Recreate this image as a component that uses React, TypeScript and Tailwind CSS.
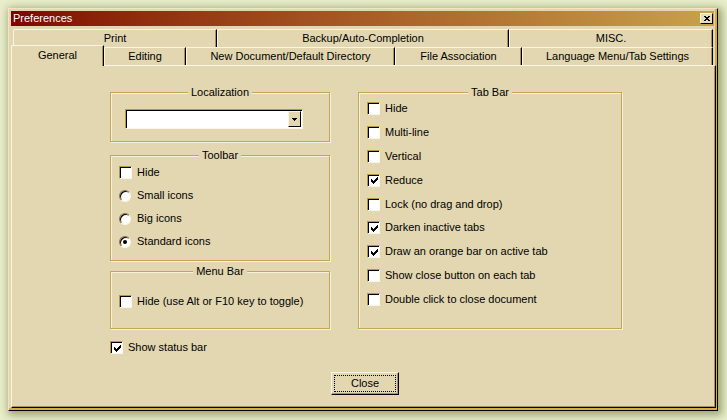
import type { ReactNode } from "react";

// classic 7x7 check glyph
const CHECK =
  "M6 0h1v1h-1z M5 1h2v1h-2z M0 2h1v1h-1z M4 2h3v1h-3z M0 3h2v1h-2z M3 3h3v1h-3z M0 4h5v1h-5z M1 5h3v1h-3z M2 6h1v1h-1z";

function CheckBox({ on }: { on?: boolean }) {
  return (
    <span className="flex h-[13px] w-[13px] shrink-0 items-center justify-center border border-t-[#b8963e] border-l-[#b8963e] border-r-[#fbf6e6] border-b-[#fbf6e6] bg-white shadow-[inset_1px_1px_0_#000]">
      {on && (
        <svg width="7" height="7" viewBox="0 0 7 7" shapeRendering="crispEdges" className="ml-[1px] mt-[1px]">
          <path d={CHECK} fill="#000" />
        </svg>
      )}
    </span>
  );
}

function Radio({ on }: { on?: boolean }) {
  return (
    <span className="flex h-[12px] w-[12px] shrink-0 items-center justify-center rounded-full border border-t-[#8a7040] border-l-[#8a7040] border-r-[#fbf6e6] border-b-[#fbf6e6] bg-white shadow-[inset_1px_1px_0_#000]">
      {on && <span className="h-[4px] w-[4px] rounded-full bg-black" />}
    </span>
  );
}

function Option({ label, on, radio }: { label: string; on?: boolean; radio?: boolean }) {
  return (
    <div className="flex h-[13px] items-center gap-[5px] whitespace-nowrap">
      {radio ? <Radio on={on} /> : <CheckBox on={on} />}
      <span className={radio ? "ml-[1px]" : ""}>{label}</span>
    </div>
  );
}

function Group({ title, className, children }: { title: string; className: string; children?: ReactNode }) {
  return (
    <div className={`relative border border-[#c4a456] shadow-[inset_1px_1px_0_#f7f0da,1px_1px_0_#f7f0da] ${className}`}>
      <span className="absolute left-1/2 top-[-7px] -translate-x-1/2 bg-[#e3d7b1] px-[3px] leading-[13px] whitespace-nowrap">
        {title}
      </span>
      {children}
    </div>
  );
}

function Tab({ label, className }: { label: string; className: string }) {
  return (
    <div
      className={`flex items-center justify-center whitespace-nowrap rounded-tl-[2px] border-t border-l border-r border-t-[#fbf5e2] border-l-[#fbf5e2] border-r-black shadow-[inset_-1px_0_0_#a89060] ${className}`}
    >
      {label}
    </div>
  );
}

export default function App() {
  return (
    <div className="h-[420px] w-[727px] overflow-hidden bg-[#e9eecb] pl-[8px] pt-[8px] font-['Liberation_Sans',Arial,sans-serif] text-[11px] leading-[13px] text-black">
      {/* window */}
      <div className="flex h-[403px] w-[710px] flex-col border border-t-[#efe6c6] border-l-[#efe6c6] border-r-black border-b-black bg-[#e3d7b1] pb-[2px] pl-[2px] pr-[1px] pt-[2px] shadow-[inset_-2px_-2px_0_#d6ab46,2px_2px_8px_2px_rgba(90,100,40,0.55)]">
        {/* title bar */}
        <div className="flex h-[15px] w-[703px] items-start justify-between bg-linear-to-r from-[#800000] to-[#c8a24a]">
          <span className="ml-[2px] mt-[1px] text-white">Preferences</span>
          <span className="mr-[1px] mt-[2px] flex h-[11px] w-[13px] items-center justify-center border border-t-[#fbf5e2] border-l-[#fbf5e2] border-r-black border-b-black bg-[#e6dcb8]">
            <svg width="6" height="5" viewBox="0 0 6 5" shapeRendering="crispEdges">
              <path d="M0 0h2v1h-2z M4 0h2v1h-2z M1 1h4v1h-4z M2 2h2v1h-2z M1 3h4v1h-4z M0 4h2v1h-2z M4 4h2v1h-2z" fill="#000" />
            </svg>
          </span>
        </div>

        {/* tab rows */}
        <div className="ml-[2px] mt-[3px] flex h-[18px]">
          <Tab label="Print" className="w-[204px]" />
          <Tab label="Backup/Auto-Completion" className="w-[292px]" />
          <Tab label="MISC." className="w-[204px]" />
        </div>
        <div className="-mt-[2px] flex h-[20px] items-end">
          <Tab label="General" className="relative z-10 -mb-[1px] h-[21px] w-[93px] bg-[#e3d7b1] pb-[2px]" />
          <Tab label="Editing" className="h-[18px] w-[82px]" />
          <Tab label="New Document/Default Directory" className="h-[18px] w-[209px]" />
          <Tab label="File Association" className="h-[18px] w-[127px]" />
          <Tab label="Language Menu/Tab Settings" className="h-[18px] w-[191px]" />
        </div>

        {/* tab panel */}
        <div className="flex flex-1 flex-col border border-t-[#fbf5e2] border-l-[#fbf5e2] border-r-black border-b-black shadow-[inset_-1px_-1px_0_#a89060]">
          <div className="ml-[98px] mt-[26px] flex items-start gap-[28px]">
            {/* left column */}
            <div className="flex w-[220px] flex-col">
              <Group title="Localization" className="h-[50px]">
                <div className="ml-[14px] mt-[16px] flex h-[20px] w-[178px] items-center justify-end border border-t-[#b8963e] border-l-[#b8963e] border-r-[#fbf6e6] border-b-[#fbf6e6] bg-white shadow-[inset_1px_1px_0_#000]">
                  <span className="mr-[1px] flex h-[16px] w-[13px] items-center justify-center border border-t-[#fbf5e2] border-l-[#fbf5e2] border-r-black border-b-black bg-[#e3d7b1]">
                    <svg width="5" height="3" viewBox="0 0 5 3" shapeRendering="crispEdges">
                      <path d="M0 0h5v1h-5z M1 1h3v1h-3z M2 2h1v1h-1z" fill="#000" />
                    </svg>
                  </span>
                </div>
              </Group>

              <Group title="Toolbar" className="mt-[13px] h-[106px]">
                <div className="ml-[8px] mt-[10px] flex flex-col gap-[10px]">
                  <Option label="Hide" />
                  <Option label="Small icons" radio />
                  <Option label="Big icons" radio />
                  <Option label="Standard icons" radio on />
                </div>
              </Group>

              <Group title="Menu Bar" className="mt-[10px] h-[58px]">
                <div className="ml-[8px] mt-[23px]">
                  <Option label="Hide (use Alt or F10 key to toggle)" />
                </div>
              </Group>
            </div>

            {/* right column */}
            <Group title="Tab Bar" className="h-[237px] w-[264px]">
              <div className="ml-[8px] mt-[9px] flex h-[204px] flex-col justify-between">
                <Option label="Hide" />
                <Option label="Multi-line" />
                <Option label="Vertical" />
                <Option label="Reduce" on />
                <Option label="Lock (no drag and drop)" />
                <Option label="Darken inactive tabs" on />
                <Option label="Draw an orange bar on active tab" on />
                <Option label="Show close button on each tab" />
                <Option label="Double click to close document" />
              </div>
            </Group>
          </div>

          <div className="ml-[98px] mt-[12px]">
            <Option label="Show status bar" on />
          </div>

          <div className="ml-[319px] mt-[18px] flex">
            <button className="flex h-[23px] w-[68px] border border-t-[#fbf5e2] border-l-[#fbf5e2] border-r-black border-b-black p-[2px] shadow-[inset_-1px_-1px_0_#a89060]">
              <span className="flex flex-1 items-center justify-center border border-dotted border-black">Close</span>
            </button>
          </div>
        </div>
      </div>
    </div>
  );
}
